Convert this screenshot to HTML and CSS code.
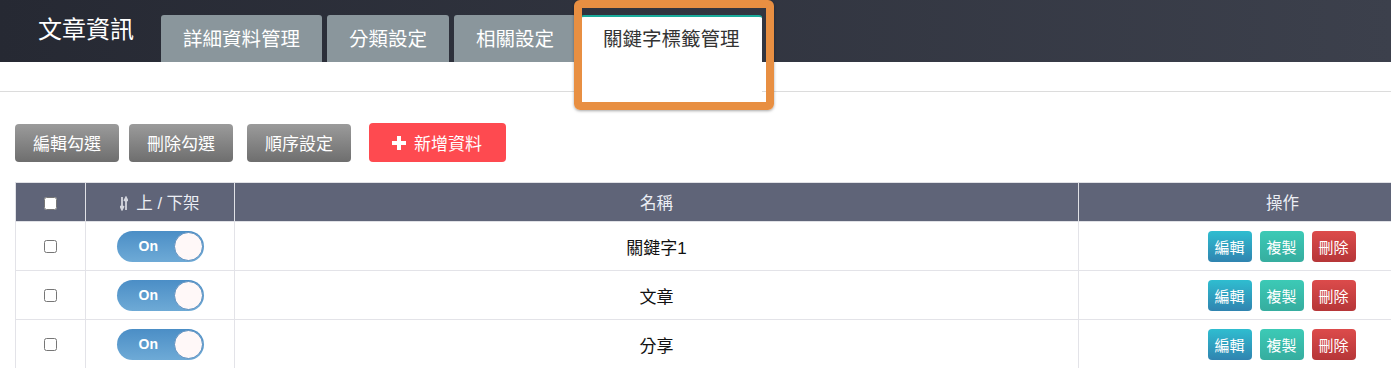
FILE: index.html
```html
<!DOCTYPE html>
<html lang="zh-Hant">
<head>
<meta charset="utf-8">
<title>文章資訊</title>
<link rel="stylesheet" href="styles.css">
</head>
<body>
<header class="topbar">
  <h1 class="title">文章資訊</h1>
  <nav class="tabs">
    <a class="tab">詳細資料管理</a>
    <a class="tab">分類設定</a>
    <a class="tab">相關設定</a>
    <a class="tab tab-active">關鍵字標籤管理</a>
  </nav>
  <div class="highlight"></div>
</header>
<div class="divider"></div>
<div class="toolbar">
  <button class="btn btn-gray">編輯勾選</button>
  <button class="btn btn-gray">刪除勾選</button>
  <button class="btn btn-gray btn-gap">順序設定</button>
  <button class="btn btn-red btn-gap2"><svg class="plus" width="14" height="14" viewBox="0 0 14 14"><rect x="5" y="0" width="4" height="14" fill="#fff"/><rect x="0" y="5" width="14" height="4" fill="#fff"/></svg>新增資料</button>
</div>
<table class="grid">
  <colgroup>
    <col class="c1"><col class="c2"><col class="c3"><col class="c4">
  </colgroup>
  <thead>
    <tr>
      <th><input type="checkbox" class="chk"></th>
      <th><svg class="sort" width="8" height="15" viewBox="0 0 8 15"><path d="M2 1 V13 M0.2 10 L2 13.5 L3.8 10" stroke="#d4d6de" stroke-width="1.8" fill="none"/><path d="M6 14 V2 M4.2 5 L6 1.5 L7.8 5" stroke="#d4d6de" stroke-width="1.8" fill="none"/></svg>上 / 下架</th>
      <th>名稱</th>
      <th>操作</th>
    </tr>
  </thead>
  <tbody>
    <tr>
      <td><input type="checkbox" class="chk"></td>
      <td><span class="switch"><span class="switch-label">On</span><span class="knob"></span></span></td>
      <td class="name">關鍵字1</td>
      <td><div class="actions"><button class="act act-edit">編輯</button><button class="act act-copy">複製</button><button class="act act-del">刪除</button></div></td>
    </tr>
    <tr>
      <td><input type="checkbox" class="chk"></td>
      <td><span class="switch"><span class="switch-label">On</span><span class="knob"></span></span></td>
      <td class="name">文章</td>
      <td><div class="actions"><button class="act act-edit">編輯</button><button class="act act-copy">複製</button><button class="act act-del">刪除</button></div></td>
    </tr>
    <tr>
      <td><input type="checkbox" class="chk"></td>
      <td><span class="switch"><span class="switch-label">On</span><span class="knob"></span></span></td>
      <td class="name">分享</td>
      <td><div class="actions"><button class="act act-edit">編輯</button><button class="act act-copy">複製</button><button class="act act-del">刪除</button></div></td>
    </tr>
  </tbody>
</table>
</body>
</html>
```

FILE: styles.css
```css
html, body {
  margin: 0;
  padding: 0;
  overflow: hidden;
  background: #fff;
}
body {
  font-family: "Liberation Sans", "Noto Sans CJK TC", sans-serif;
  color: #222;
}
.topbar {
  position: relative;
  height: 62px;
  display: flex;
  align-items: flex-start;
  background: linear-gradient(to right, #262933, #3c404c);
}
.title {
  margin: 17px 27px 0 38px;
  font-size: 24px;
  line-height: 26px;
  font-weight: normal;
  color: #fff;
}
.tabs {
  display: flex;
  gap: 5px;
  margin-top: 15px;
}
.tab {
  display: block;
  height: 47px;
  box-sizing: border-box;
  padding: 12px 22px 0;
  font-size: 19.5px;
  line-height: 24px;
  color: #fff;
  background: #8a969c;
  border-radius: 3px 3px 0 0;
}
.tab-active {
  position: relative;
  z-index: 1;
  height: 87px;
  padding-top: 10px;
  background: #fff;
  color: #333;
  border-top: 2px solid #1aab9b;
}
.highlight {
  position: absolute;
  z-index: 2;
  left: 574px;
  top: 0;
  width: 200px;
  height: 110px;
  box-sizing: border-box;
  border: 8px solid #e88f42;
  border-radius: 6px;
  box-shadow: 0 1px 3px rgba(0, 0, 0, 0.35);
}
.divider {
  height: 29px;
  border-bottom: 1px solid #dcdcdc;
}
.toolbar {
  display: flex;
  align-items: center;
  gap: 10px;
  padding: 31px 0 0 15px;
  height: 39px;
}
.btn {
  height: 38px;
  border: none;
  border-radius: 4px;
  font-family: inherit;
  font-size: 17px;
  color: #fff;
  display: flex;
  align-items: center;
  padding: 0 18px;
}
.btn-gray {
  background: linear-gradient(to bottom, #9b9b9b, #6e6e6e);
}
.btn-gap {
  margin-left: 4px;
}
.btn-red {
  background: #fe4a50;
  padding: 0 24px 0 23px;
  gap: 8px;
  height: 39px;
}
.btn-gap2 {
  margin-left: 8px;
}
.grid {
  margin: 20px 0 0 15px;
  width: 1471px;
  table-layout: fixed;
  border-collapse: collapse;
}
.c1 { width: 70px; }
.c2 { width: 149px; }
.c3 { width: 844px; }
.c4 { width: 408px; }
.grid th {
  height: 38px;
  padding: 0;
  background: #5f6478;
  color: #eceef4;
  font-weight: normal;
  font-size: 16.5px;
  border: 1px solid #e0e1e6;
  text-align: center;
  vertical-align: middle;
}
.grid td {
  height: 48px;
  padding: 0;
  border: 1px solid #e3e3e8;
  text-align: center;
  vertical-align: middle;
}
.sort {
  vertical-align: -2px;
  margin-right: 8px;
}
.chk {
  margin: 0;
  width: 13px;
  height: 13px;
  vertical-align: middle;
}
.switch {
  display: inline-flex;
  align-items: center;
  justify-content: space-between;
  width: 87px;
  height: 31px;
  box-sizing: border-box;
  border-radius: 16px;
  background: linear-gradient(to bottom, #4b8ec6, #6eaad6);
  padding: 0 1px 0 22px;
  vertical-align: middle;
}
.switch-label {
  font-family: "Liberation Sans", sans-serif;
  font-weight: bold;
  font-size: 14px;
  color: #fff;
}
.knob {
  width: 29px;
  height: 29px;
  box-sizing: border-box;
  border-radius: 50%;
  background: #fff8f8;
  border: 1px solid #5b8fbf;
}
.name {
  font-size: 17px;
  color: #111;
}
.actions {
  display: flex;
  justify-content: center;
  gap: 8px;
  padding-right: 2px;
}
.act {
  width: 44px;
  height: 31px;
  border: none;
  border-radius: 4px;
  padding: 0;
  font-family: inherit;
  font-size: 15px;
  color: #fff;
}
.act-edit {
  background: linear-gradient(to bottom, #2fbdd0, #3084b0);
}
.act-copy {
  background: linear-gradient(to bottom, #3ccab6, #36ad9f);
}
.act-del {
  background: linear-gradient(to bottom, #dc4b4b, #b63638);
}
```
